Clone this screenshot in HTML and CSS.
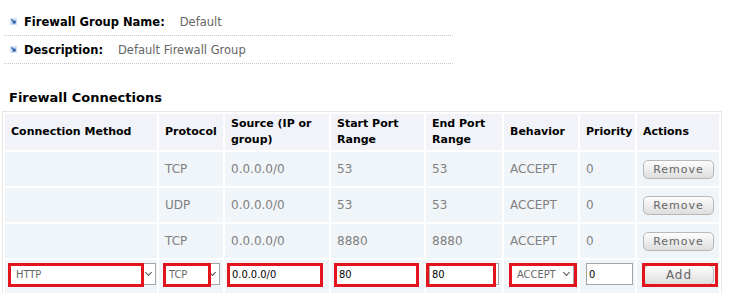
FILE: index.html
```html
<!DOCTYPE html>
<html lang="en">
<head>
  <meta charset="UTF-8" />
  <title>Firewall Group</title>
  <link rel="stylesheet" href="styles.css">
</head>
<body>
  <div class="info">
    <div class="info-row">
      <span class="bullet"><svg width="7" height="7" viewBox="0 0 7 7"><rect width="7" height="7" fill="#cfe0f3"/><path d="M1.5 1.5 L5 5 M5 2.5 V5 H2.5" stroke="#1b4ea3" stroke-width="1.2" fill="none"/></svg></span>
      <span class="label">Firewall Group Name:</span>
      <span class="value">Default</span>
    </div>
    <div class="info-row">
      <span class="bullet"><svg width="7" height="7" viewBox="0 0 7 7"><rect width="7" height="7" fill="#cfe0f3"/><path d="M1.5 1.5 L5 5 M5 2.5 V5 H2.5" stroke="#1b4ea3" stroke-width="1.2" fill="none"/></svg></span>
      <span class="label">Description:</span>
      <span class="value">Default Firewall Group</span>
    </div>
  </div>

  <h3>Firewall Connections</h3>

  <table class="rules">
    <thead>
      <tr>
        <th class="c-method">Connection Method</th>
        <th class="c-proto">Protocol</th>
        <th class="c-src">Source (IP or group)</th>
        <th class="c-start">Start Port Range</th>
        <th class="c-end">End Port Range</th>
        <th class="c-beh">Behavior</th>
        <th class="c-prio">Priority</th>
        <th class="c-act">Actions</th>
      </tr>
    </thead>
    <tbody>
      <tr>
        <td></td><td>TCP</td><td>0.0.0.0/0</td><td>53</td><td>53</td><td>ACCEPT</td><td>0</td>
        <td><button class="btn">Remove</button></td>
      </tr>
      <tr>
        <td></td><td>UDP</td><td>0.0.0.0/0</td><td>53</td><td>53</td><td>ACCEPT</td><td>0</td>
        <td><button class="btn">Remove</button></td>
      </tr>
      <tr>
        <td></td><td>TCP</td><td>0.0.0.0/0</td><td>8880</td><td>8880</td><td>ACCEPT</td><td>0</td>
        <td><button class="btn">Remove</button></td>
      </tr>
      <tr class="new-row">
        <td>
          <div class="field sel sel-method"><span>HTTP</span><i></i></div>
          <span class="mark m-method"></span>
        </td>
        <td>
          <div class="field sel sel-proto"><span>TCP</span><i></i></div>
          <span class="mark m-proto"></span>
        </td>
        <td>
          <input class="field txt in-src" value="0.0.0.0/0">
          <span class="mark m-src"></span>
        </td>
        <td>
          <input class="field txt in-start" value="80">
          <span class="mark m-start"></span>
        </td>
        <td>
          <input class="field txt in-end" value="80">
          <span class="mark m-end"></span>
        </td>
        <td>
          <div class="field sel sel-beh"><span>ACCEPT</span><i></i></div>
          <span class="mark m-beh"></span>
        </td>
        <td>
          <input class="field txt in-prio" value="0">
        </td>
        <td>
          <button class="btn btn-add">Add</button>
          <span class="mark m-add"></span>
        </td>
      </tr>
    </tbody>
  </table>
</body>
</html>
```

FILE: styles.css
```css
body {
  margin: 0;
  padding: 8px 0 0 4px;
  font-family: "DejaVu Sans", Verdana, sans-serif;
  font-size: 11.5px;
  color: #000;
  background: #fff;
}
.info { width: 449px; }
.info-row {
  display: flex;
  align-items: center;
  height: 27px;
  border-bottom: 1px dotted #c8c8c8;
}
.bullet { display: flex; margin: 0 7px 0 6px; }
.label { font-weight: bold; }
.value { color: #666; margin-left: 15px; }

h3 {
  margin: 26px 0 0 5px;
  font-size: 13px;
  line-height: 16px;
}

.rules {
  margin: 5px 0 0 -2px;
  width: 718px;
  table-layout: fixed;
  border-collapse: separate;
  border-spacing: 2px;
  border: 1px solid #e6e6e6;
  background: #fff;
}
.rules th, .rules td {
  box-sizing: border-box;
  padding: 0 6px;
  text-align: left;
  vertical-align: middle;
}
.rules th {
  background: #f2f3f8;
  height: 36px;
  font-size: 11px;
  font-weight: bold;
  line-height: 16px;
}
.rules td {
  background: #f0f5fa;
  color: #808080;
  height: 34px;
  font-size: 12px;
}
.c-method { width: 152px; }
.c-proto { width: 64px; }
.c-src { width: 104px; }
.c-start { width: 93px; }
.c-end { width: 76px; }
.c-beh { width: 74px; }
.c-prio { width: 55px; }
.c-act { width: 82px; }

.btn {
  font-family: "DejaVu Sans", Verdana, sans-serif;
  font-size: 11px;
  letter-spacing: 1px;
  color: #666;
  width: 71px;
  height: 19px;
  padding: 0;
  border: 1px solid #b8b8b8;
  border-radius: 5px;
  background: linear-gradient(#fdfdfd, #dedede);
}
.btn-add { height: 20px; margin: 5px 0 0 7px; width: 70px; font-size: 12px; }

.new-row td { position: relative; vertical-align: top; padding: 0; }
.field {
  display: block;
  box-sizing: border-box;
  height: 22px;
  margin-top: 3px;
  border: 1px solid #a5a5a5;
  background: #fff;
  font-family: "DejaVu Sans Condensed", "DejaVu Sans", sans-serif;
  font-size: 11px;
}
.txt { padding: 0 2px; color: #000; }
.sel {
  display: flex;
  align-items: center;
  justify-content: space-between;
  padding: 0 4px 0 5px;
  color: #666;
}
.sel i {
  width: 4px;
  height: 4px;
  border-right: 1px solid #555;
  border-bottom: 1px solid #555;
  transform: rotate(45deg);
  margin-top: -3px;
}
.sel-method { width: 146px; margin-left: 5px; }
.sel-proto { width: 57px; margin-left: 4px; }
.sel-beh { width: 63px; margin-left: 7px; }
.in-src { width: 92px; margin-left: 4px; }
.in-start { width: 82px; margin-left: 5px; }
.in-end { width: 70px; margin-left: 3px; }
.in-prio { width: 47px; margin-left: 6px; }

.mark {
  position: absolute;
  top: 3px;
  height: 24px;
  box-sizing: border-box;
  border: 3px solid #e3141d;
}
.m-method { left: 3px; width: 136px; }
.m-proto { left: 4px; width: 48px; }
.m-src { left: 2px; width: 96px; }
.m-start { left: 3px; width: 85px; }
.m-end { left: 0; width: 70px; }
.m-beh { left: 5px; width: 68px; }
.m-add { left: 5px; width: 76px; }
```
